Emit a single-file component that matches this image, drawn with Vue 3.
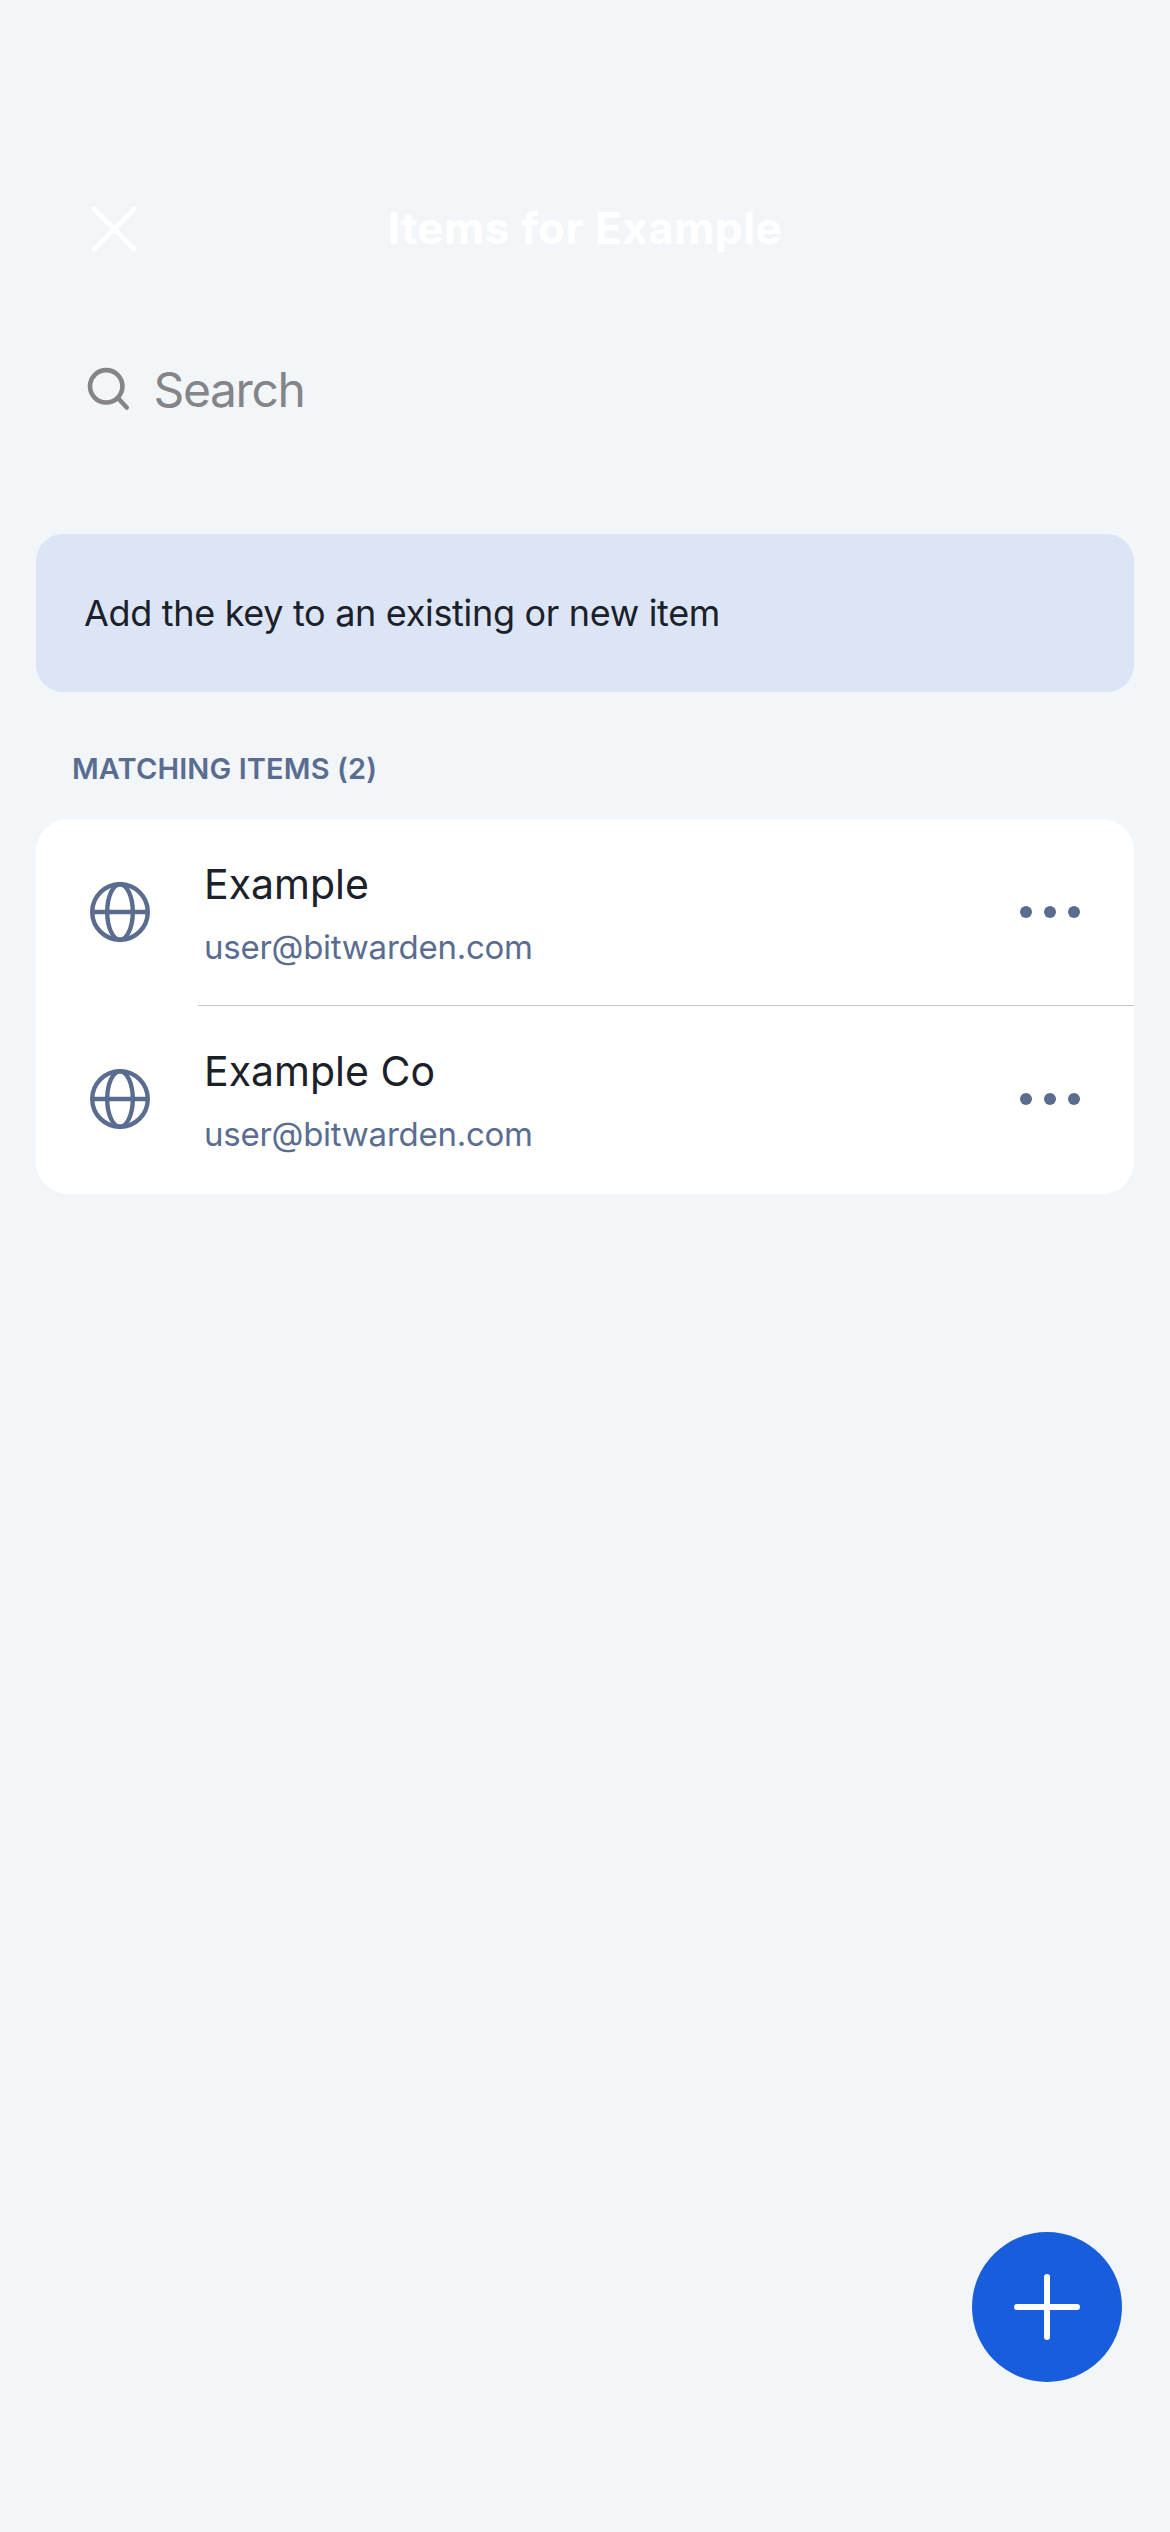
<script setup>
const items = [
  { name: 'Example', user: 'user@bitwarden.com' },
  { name: 'Example Co', user: 'user@bitwarden.com' },
]
</script>

<template>
  <main class="screen">
    <header class="bar">
      <svg class="close" viewBox="0 0 48 48" aria-label="Close">
        <path d="M4 4L44 44M44 4L4 44" />
      </svg>
      <h1 class="title">Items for Example</h1>
    </header>

    <div class="search">
      <svg class="lens" viewBox="0 0 46 46">
        <circle cx="20.2" cy="19.3" r="16.2" />
        <path d="M31.7 30.8L40.7 40.5" />
      </svg>
      <span class="placeholder">Search</span>
    </div>

    <p class="banner">Add the key to an existing or new item</p>

    <h2 class="section">MATCHING ITEMS (2)</h2>

    <ul class="card">
      <li v-for="item in items" :key="item.name" class="row">
        <svg class="globe" viewBox="0 0 60 60">
          <circle cx="30" cy="30" r="27.8" />
          <ellipse cx="30" cy="30" rx="12.8" ry="27.8" />
          <path d="M2 30H58" />
        </svg>
        <div class="info">
          <span class="name">{{ item.name }}</span>
          <span class="user">{{ item.user }}</span>
        </div>
        <svg class="more" viewBox="0 0 60 12">
          <circle cx="6" cy="6" r="6" />
          <circle cx="30" cy="6" r="6" />
          <circle cx="54" cy="6" r="6" />
        </svg>
      </li>
    </ul>

    <button class="fab" aria-label="Add item">
      <svg viewBox="0 0 66 66">
        <path d="M33 3V63M3 33H63" />
      </svg>
    </button>
  </main>
</template>

<style>
body {
  background: #f2f6f9;
}
</style>

<style scoped>
.screen {
  position: relative;
  box-sizing: border-box;
  width: 1170px;
  height: 2532px;
  padding: 184px 36px 0;
  background: #f2f6f9;
  font-family: Inter, 'Liberation Sans', sans-serif;
  white-space: nowrap;
}
.bar {
  display: grid;
  grid-template-columns: 150px 1fr 150px;
  align-items: center;
  height: 90px;
}
.close {
  width: 48px;
  height: 48px;
  margin-left: 53.5px;
  fill: none;
  stroke: #fff;
  stroke-width: 4.6;
  stroke-linecap: round;
}
.title {
  margin: 0;
  padding-bottom: 3px;
  color: #fff;
  font-size: 44px;
  font-weight: 700;
  line-height: 54px;
  letter-spacing: 0.53px;
  text-align: center;
}
.search {
  display: flex;
  align-items: center;
  height: 100px;
  margin-top: 66px;
  padding-left: 50px;
}
.lens {
  width: 46px;
  height: 46px;
  fill: none;
  stroke: #858589;
  stroke-width: 4.6;
  stroke-linecap: round;
}
.placeholder {
  margin-left: 21.5px;
  color: #858589;
  font-size: 48px;
  line-height: 60px;
  letter-spacing: -1.4px;
}
.banner {
  height: 158px;
  margin: 94px 0 0;
  padding-left: 48px;
  border-radius: 27px;
  background: #dbe5f6;
  color: #1b2029;
  font-size: 36px;
  line-height: 158px;
  letter-spacing: -0.32px;
}
.section {
  margin: 59px 0 33px;
  padding-left: 36px;
  color: #5a6d91;
  font-size: 29px;
  font-weight: 600;
  line-height: 35px;
  letter-spacing: 0.12px;
}
.card {
  margin: 0;
  padding: 0 0 2px;
  list-style: none;
  border-radius: 32px;
  background: #fff;
}
.row {
  display: flex;
  align-items: center;
  height: 186px;
  padding: 0 54px;
}
.row + .row {
  border-top: 1px solid transparent;
  background: linear-gradient(#c6c6c8, #c6c6c8) 162px 0 / 100% 1px no-repeat border-box;
}
.globe {
  width: 60px;
  height: 60px;
  fill: none;
  stroke: #5a6d91;
  stroke-width: 4.4;
}
.info {
  display: flex;
  flex: 1;
  flex-direction: column;
  gap: 18px;
  margin-left: 54px;
}
.name {
  color: #1b2029;
  font-size: 41px;
  line-height: 52px;
}
.user {
  color: #5a6d91;
  font-size: 33px;
  line-height: 38px;
  letter-spacing: -0.26px;
}
.more {
  width: 60px;
  height: 12px;
  fill: #5a6d91;
}
.fab {
  position: absolute;
  right: 48px;
  bottom: 150px;
  display: grid;
  place-items: center;
  width: 150px;
  height: 150px;
  padding: 0;
  border: 0;
  border-radius: 50%;
  background: #175ddc;
}
.fab svg {
  width: 66px;
  height: 66px;
  fill: none;
  stroke: #fff;
  stroke-width: 6;
  stroke-linecap: round;
}
</style>
